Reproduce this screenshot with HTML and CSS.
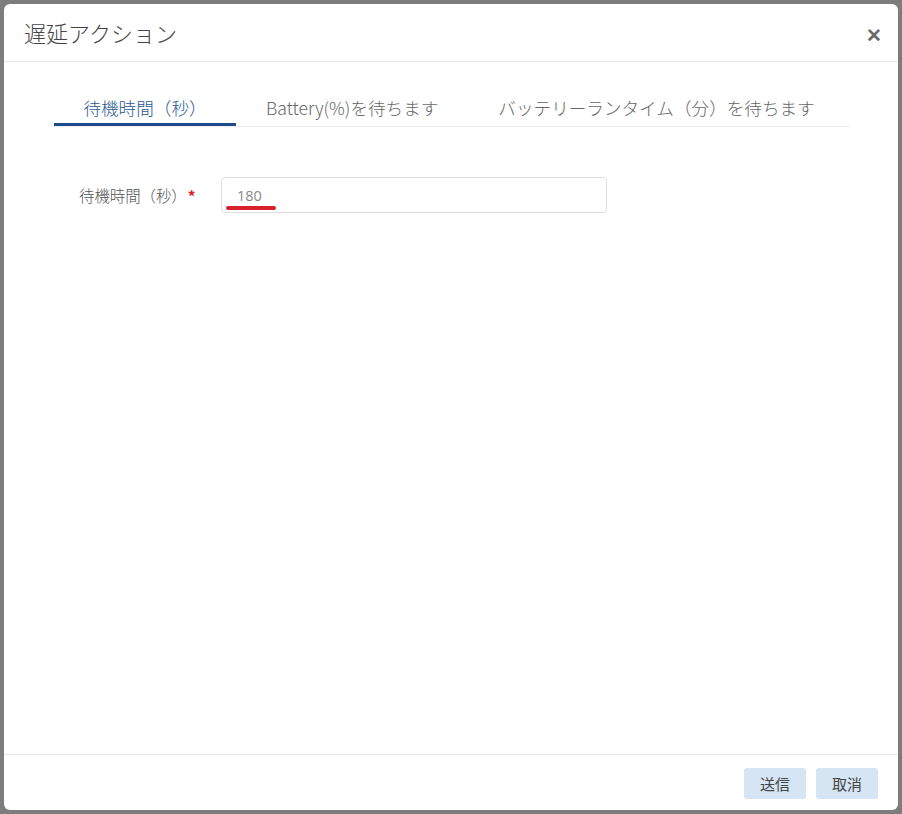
FILE: index.html
```html
<!DOCTYPE html>
<html lang="ja">
<head>
    <meta charset="UTF-8">
    <title>遅延アクション</title>
    <link rel="stylesheet" href="styles.css">
</head>
<body>
<div class="dialog">
    <div class="dialog-header">
        <span class="dialog-title">遅延アクション</span>
        <span class="dialog-close">&#x2715;</span>
    </div>
    <div class="dialog-body">
        <ul class="tabs">
            <li class="tab tab-active">待機時間（秒）</li>
            <li class="tab">Battery(%)を待ちます</li>
            <li class="tab">バッテリーランタイム（分）を待ちます</li>
        </ul>
        <div class="form-row">
            <label class="form-label">待機時間（秒）<span class="required">*</span></label>
            <div class="input-wrap">
                <input class="form-input" type="text" value="180">
                <span class="mark"></span>
            </div>
        </div>
    </div>
    <div class="dialog-footer">
        <button class="btn">送信</button>
        <button class="btn">取消</button>
    </div>
</div>
</body>
</html>
```

FILE: styles.css
```css
*{
    margin: 0;
    padding: 0;
    box-sizing: border-box;
}
html,body{
    width: 100%;
    height: 100%;
}
body{
    background: #7d7d7d;
    padding: 4px;
    font-family: "Open Sans", "Noto Sans CJK JP", sans-serif;
    color: #333;
}
.dialog{
    width: 894px;
    height: 806px;
    background: #fff;
    border-radius: 6px;
    display: flex;
    flex-direction: column;
}
.dialog-header{
    height: 58px;
    border-bottom: 1px solid #e8e8e8;
    display: flex;
    align-items: center;
    justify-content: space-between;
    padding: 0 16px 2px 20px;
}
.dialog-title{
    font-size: 22px;
    color: #444;
    font-family: "Noto Sans CJK JP", sans-serif;
    font-weight: 300;
}
.dialog-close{
    font-size: 19px;
    font-weight: bold;
    color: #6a6a6a;
    margin-top: 6px;
}
.dialog-body{
    flex: 1;
    padding: 27px 49px 0 50px;
}
.tabs{
    list-style: none;
    display: flex;
    border-bottom: 1px solid #ececec;
}
.tab{
    height: 37px;
    line-height: 34px;
    padding: 2px 30px 0;
    font-size: 17.6px;
    color: #666;
    font-family: "Noto Sans CJK JP", sans-serif;
    font-weight: 300;
    white-space: nowrap;
}
.tab-active{
    width: 182px;
    padding: 2px 0 0;
    text-align: center;
    color: #2a5a96;
    border-bottom: 3px solid #1c4c8c;
    margin-bottom: -1px;
}
.form-row{
    display: flex;
    align-items: center;
    margin-top: 50px;
    padding-left: 25px;
}
.form-label{
    width: 142px;
    font-size: 15.4px;
    color: #555;
    font-family: "Noto Sans CJK JP", sans-serif;
    font-weight: 300;
    white-space: nowrap;
}
.required{
    color: #e0202a;
    margin-left: 1px;
    font-weight: bold;
}
.input-wrap{
    position: relative;
}
.form-input{
    width: 386px;
    height: 36px;
    border: 1px solid #dedede;
    border-radius: 4px;
    padding-left: 15px;
    font-size: 14.5px;
    color: #888;
    font-family: "Open Sans", sans-serif;
    outline: none;
}
.mark{
    position: absolute;
    left: 5px;
    top: 29px;
    width: 50px;
    height: 4px;
    background: #d8212b;
    border-radius: 2px;
}
.dialog-footer{
    height: 56px;
    border-top: 1px solid #e8e8e8;
    display: flex;
    justify-content: flex-end;
    align-items: flex-start;
    gap: 10px;
    padding: 13px 20px 0 0;
}
.btn{
    width: 62px;
    height: 31px;
    border: none;
    border-radius: 3px;
    background: #d5e5f3;
    color: #444;
    font-size: 15px;
    font-family: "Noto Sans CJK JP", sans-serif;
}
```
